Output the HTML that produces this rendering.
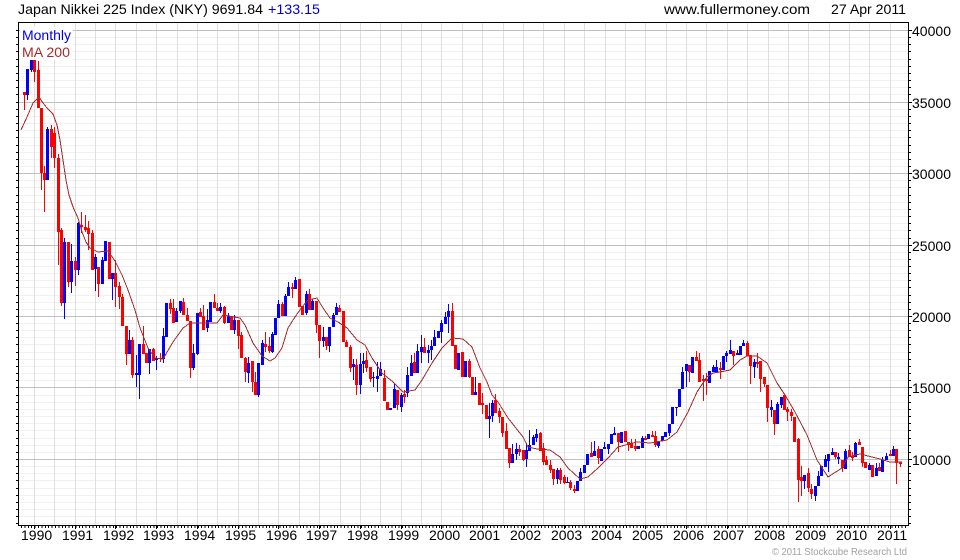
<!DOCTYPE html>
<html><head><meta charset="utf-8"><title>Japan Nikkei 225 Index</title>
<style>html,body{margin:0;padding:0;background:#fff}svg{display:block}text{font-family:"Liberation Sans",Arial,sans-serif;font-size:14px;fill:#000}</style></head>
<body>
<svg xmlns="http://www.w3.org/2000/svg" width="960" height="560" viewBox="0 0 960 560">
<g shape-rendering="crispEdges" fill="none">
<path stroke="#f0f0f0" stroke-width="1" d="M19 37.5H908M19 44.5H908M19 51.5H908M19 59.5H908M19 66.5H908M19 73.5H908M19 80.5H908M19 87.5H908M19 94.5H908M19 109.5H908M19 116.5H908M19 123.5H908M19 130.5H908M19 137.5H908M19 145.5H908M19 152.5H908M19 159.5H908M19 166.5H908M19 180.5H908M19 187.5H908M19 195.5H908M19 202.5H908M19 209.5H908M19 216.5H908M19 223.5H908M19 230.5H908M19 238.5H908M19 252.5H908M19 259.5H908M19 266.5H908M19 273.5H908M19 280.5H908M19 287.5H908M19 295.5H908M19 302.5H908M19 309.5H908M19 323.5H908M19 330.5H908M19 337.5H908M19 344.5H908M19 352.5H908M19 359.5H908M19 366.5H908M19 373.5H908M19 380.5H908M19 395.5H908M19 402.5H908M19 409.5H908M19 416.5H908M19 423.5H908M19 430.5H908M19 438.5H908M19 445.5H908M19 452.5H908M19 466.5H908M19 473.5H908M19 480.5H908M19 488.5H908M19 495.5H908M19 502.5H908M19 509.5H908M19 516.5H908M19 523.5H908"/>
<path stroke="#dedede" stroke-width="1" d="M34.5 23V525M54.5 23V525M75.5 23V525M95.5 23V525M115.5 23V525M136.5 23V525M156.5 23V525M177.5 23V525M197.5 23V525M217.5 23V525M238.5 23V525M258.5 23V525M278.5 23V525M299.5 23V525M319.5 23V525M340.5 23V525M360.5 23V525M380.5 23V525M401.5 23V525M421.5 23V525M441.5 23V525M462.5 23V525M482.5 23V525M503.5 23V525M523.5 23V525M543.5 23V525M564.5 23V525M584.5 23V525M605.5 23V525M625.5 23V525M645.5 23V525M666.5 23V525M686.5 23V525M706.5 23V525M727.5 23V525M747.5 23V525M768.5 23V525M788.5 23V525M808.5 23V525M829.5 23V525M849.5 23V525M869.5 23V525M890.5 23V525"/>
<path stroke="#c0c0c0" stroke-width="1" d="M19 30.5H908M19 102.5H908M19 173.5H908M19 245.5H908M19 316.5H908M19 387.5H908M19 459.5H908"/>
<rect x="20" y="27" width="53" height="33" fill="#fff" stroke="none"/>

<!-- red wicks -->
<path stroke="#f00" stroke-width="1" d="M24.5 92V110M34.5 60V82M38.5 61V108M41.5 108V190M44.5 166V212M51.5 125V158M54.5 127V168M58.5 154V265M61.5 228V306M68.5 242V287M75.5 257V286M81.5 212V233M85.5 215V232M88.5 221V250M92.5 230V270M98.5 267V297M115.5 260V307M119.5 282V309M122.5 294V326M126.5 326V365M132.5 337V378M143.5 326V354M153.5 348V361M160.5 353V362M170.5 299V314M173.5 299V323M183.5 298V315M187.5 308V321M190.5 321V378M200.5 308V317M203.5 305V330M214.5 294V308M217.5 303V311M224.5 306V324M238.5 320V349M241.5 332V358M245.5 357V382M252.5 361V392M255.5 372V395M265.5 332V352M269.5 337V353M282.5 302V316M292.5 283V298M309.5 289V310M316.5 301V333M319.5 325V358M326.5 337V350M339.5 305V312M346.5 340V347M350.5 345V372M356.5 359V395M366.5 351V372M370.5 367V382M384.5 370V401M397.5 390V410M404.5 390V403M414.5 353V373M424.5 338V353M452.5 303V346M469.5 359V378M479.5 383V405M482.5 393V414M495.5 394V413M499.5 408V423M502.5 417V437M506.5 423V449M509.5 448V468M519.5 445V456M523.5 450V461M540.5 432V451M543.5 443V465M546.5 456V465M550.5 460V473M553.5 469V485M560.5 468V484M564.5 475V484M570.5 480V490M574.5 485V493M591.5 442V457M598.5 446V464M618.5 433V452M628.5 442V451M631.5 439V448M635.5 439V451M645.5 436V440M652.5 431V437M655.5 431V447M689.5 365V382M696.5 351V361M699.5 353V382M703.5 375V401M706.5 373V395M720.5 362V379M733.5 351V365M747.5 341V356M750.5 355V384M757.5 353V368M760.5 361V392M764.5 377V387M767.5 385V422M774.5 410V435M787.5 407V421M791.5 409V421M798.5 438V502M801.5 466V496M808.5 468V492M811.5 484V499M835.5 452V459M842.5 460V472M849.5 445V457M852.5 452V461M859.5 439V445M862.5 447V467M879.5 463V471M890.5 450V456M896.5 449V484M900.5 462V467"/>
<!-- blue wicks -->
<path stroke="#00f" stroke-width="1" d="M27.5 69V100M31.5 60V72M47.5 127V180M64.5 238V319M71.5 244V293M78.5 222V275M95.5 254V291M102.5 257V284M112.5 273V300M129.5 330V354M136.5 355V387M139.5 344V399M149.5 349V374M156.5 356V370M163.5 328V363M176.5 308V322M180.5 301V313M193.5 344V370M197.5 313V355M207.5 309V332M220.5 303V313M228.5 313V323M234.5 315V334M248.5 357V383M258.5 363V397M262.5 340V365M272.5 332V353M278.5 300V318M285.5 294V316M288.5 282V296M295.5 277V289M306.5 291V315M312.5 299V310M323.5 327V347M329.5 327V352M333.5 313V327M336.5 303V315M353.5 359V380M360.5 353V394M363.5 353V373M373.5 372V387M377.5 362V392M380.5 362V376M394.5 383V408M401.5 393V412M407.5 367V397M411.5 355V376M417.5 344V373M421.5 335V363M428.5 345V363M431.5 340V360M434.5 330V346M441.5 320V343M445.5 312V324M448.5 304V333M475.5 377V395M489.5 403V438M492.5 400V422M512.5 444V463M516.5 443V460M526.5 443V467M529.5 430V451M533.5 435V445M536.5 429V442M557.5 468V484M567.5 477V483M580.5 468V481M594.5 441V456M604.5 442V449M608.5 444V454M614.5 427V435M642.5 436V448M658.5 442V448M669.5 424V436M676.5 407V416M682.5 367V389M686.5 364V387M713.5 365V372M716.5 360V372M726.5 351V362M730.5 340V354M737.5 350V355M743.5 340V346M754.5 359V378M771.5 400V417M777.5 402V424M781.5 397V408M804.5 475V489M815.5 486V501M818.5 471V486M825.5 455V467M828.5 454V472M832.5 448V455M838.5 453V464M845.5 449V469M855.5 442V457M869.5 463V470M876.5 463V476M882.5 457V472M886.5 453V460M893.5 446V456"/>
<!-- red bodies -->
<path stroke="#f00" stroke-width="3" d="M24.5 92V95M34.5 60V72M38.5 70V108M41.5 108V173M44.5 173V180M51.5 129V147M54.5 133V158M58.5 158V232M61.5 230V303M68.5 242V282M75.5 261V270M81.5 225V227M85.5 227V230M88.5 228V234M92.5 233V270M98.5 267V284M109.5 242V279M115.5 273V287M119.5 286V297M122.5 297V326M126.5 326V354M132.5 340V375M143.5 344V354M146.5 353V363M153.5 349V361M160.5 358V359M170.5 303V309M173.5 308V323M183.5 302V315M187.5 315V321M190.5 321V368M200.5 312V317M203.5 316V330M214.5 302V308M217.5 308V311M224.5 307V323M231.5 317V330M238.5 320V336M241.5 335V358M245.5 358V372M252.5 361V382M255.5 382V395M265.5 344V347M269.5 346V351M282.5 304V316M292.5 287V289M299.5 279V307M302.5 306V315M309.5 294V310M316.5 301V325M319.5 325V341M326.5 337V346M339.5 308V312M343.5 311V342M346.5 342V347M350.5 347V368M356.5 365V385M366.5 360V368M370.5 367V379M384.5 378V401M387.5 402V410M397.5 390V405M404.5 394V397M414.5 362V373M424.5 347V353M452.5 311V346M455.5 345V369M462.5 352V377M469.5 361V377M472.5 377V395M479.5 383V405M482.5 403V405M486.5 405V419M495.5 400V413M499.5 411V417M502.5 417V433M506.5 431V449M509.5 448V463M519.5 449V452M523.5 450V460M540.5 433V451M543.5 448V462M546.5 460V465M550.5 465V470M553.5 469V479M560.5 470V480M564.5 477V483M570.5 482V488M574.5 489V491M591.5 453V457M598.5 449V458M618.5 433V442M625.5 431V442M628.5 442V445M631.5 443V448M635.5 446V449M645.5 438V440M652.5 435V437M655.5 436V445M689.5 365V372M696.5 357V361M699.5 360V382M703.5 379V381M706.5 379V381M720.5 368V370M733.5 351V356M747.5 343V356M750.5 355V366M757.5 362V364M760.5 361V379M764.5 377V384M767.5 385V408M774.5 410V424M784.5 395V410M787.5 409V412M791.5 412V416M794.5 417V442M798.5 439V480M801.5 477V481M808.5 473V488M811.5 489V494M835.5 452V457M842.5 460V468M849.5 450V457M852.5 456V458M859.5 442V445M862.5 447V463M865.5 462V468M872.5 465V477M879.5 467V471M890.5 454V456M896.5 449V463M900.5 462V464"/>
<!-- blue bodies -->
<path stroke="#00f" stroke-width="3" d="M27.5 69V95M31.5 60V70M47.5 129V180M64.5 242V303M71.5 261V282M78.5 223V270M95.5 257V269M102.5 260V284M105.5 241V261M112.5 273V279M129.5 340V354M136.5 373V375M139.5 344V375M149.5 349V363M156.5 358V360M163.5 336V359M166.5 303V337M176.5 311V322M180.5 301V311M193.5 353V368M197.5 313V354M207.5 320V328M210.5 302V322M220.5 307V311M228.5 316V323M234.5 320V330M248.5 363V373M258.5 363V395M262.5 343V365M272.5 334V352M275.5 318V335M278.5 304V318M285.5 296V316M288.5 287V296M295.5 280V289M306.5 294V313M312.5 301V310M323.5 337V341M329.5 327V346M333.5 315V327M336.5 307V315M353.5 364V367M360.5 364V385M363.5 361V364M373.5 377V378M377.5 376V379M380.5 369V376M390.5 408V410M394.5 389V408M401.5 395V407M407.5 375V393M411.5 363V376M417.5 351V373M421.5 347V352M428.5 350V353M431.5 346V350M434.5 337V346M438.5 331V338M441.5 323V332M445.5 317V324M448.5 311V317M458.5 353V370M465.5 361V377M475.5 392V395M489.5 416V419M492.5 403V416M512.5 454V463M516.5 449V454M526.5 450V459M529.5 445V451M533.5 437V445M536.5 434V438M557.5 470V479M567.5 482V483M577.5 481V491M580.5 472V481M584.5 465V473M587.5 454V465M594.5 451V456M601.5 449V461M604.5 447V449M608.5 444V449M611.5 434V444M614.5 433V435M621.5 432V443M638.5 446V449M642.5 438V448M648.5 434V439M658.5 442V446M662.5 436V441M665.5 432V437M669.5 424V433M672.5 407V424M676.5 407V408M679.5 389V407M682.5 372V389M686.5 364V371M692.5 357V373M709.5 371V383M713.5 367V372M716.5 367V372M723.5 356V370M726.5 353V356M730.5 350V354M737.5 353V355M740.5 346V355M743.5 343V346M754.5 362V367M771.5 407V410M777.5 404V424M781.5 397V405M804.5 475V481M815.5 486V496M818.5 476V486M821.5 466V476M825.5 459V467M828.5 454V461M832.5 452V455M838.5 457V459M845.5 451V469M855.5 443V457M869.5 465V470M876.5 468V476M882.5 460V472M886.5 456V460M893.5 449V456"/>
<!-- moving average -->
<polyline stroke="#a52a2a" stroke-width="1" points="21,130 27,117 33,103 39,97 43,103 47,108 53,114 57,125 60,140 63,160 66,180 69,195 73,207 78,218 82,232 86,242 90,248 98,252 108,251 115,261 122,275 128,290 135,310 140,328 148,348 155,358 163,359 173,342 183,328 190,323 217,323 223,315 240,318 245,325 253,343 262,356 270,361 275,358 282,348 288,328 295,317 302,307 308,300 317,298 323,308 330,318 338,322 347,328 357,340 365,345 372,358 382,373 393,382 403,392 415,390 422,380 432,363 442,348 452,338 463,339 472,347 480,368 487,382 492,395 498,402 508,418 523,437 528,447 537,449 550,450 560,457 568,468 580,479 588,477 598,468 608,458 618,447 637,442 650,443 667,440 677,432 688,412 697,392 707,377 713,373 720,372 730,370 740,360 747,356 757,356 767,363 777,383 785,395 795,412 807,435 817,460 828,477 842,468 848,457 860,454 880,459 890,462 902,462"/>
<!-- frame -->
<path stroke="#000" stroke-width="1" d="M18 22.5H909M908.5 22V526M18.5 22V526M18 525.5H909"/>
<path stroke="#000" stroke-width="1" d="M16 30.5H18M16 37.5H18M16 44.5H18M16 51.5H18M16 59.5H18M16 66.5H18M16 73.5H18M16 80.5H18M16 87.5H18M16 94.5H18M16 102.5H18M16 109.5H18M16 116.5H18M16 123.5H18M16 130.5H18M16 137.5H18M16 145.5H18M16 152.5H18M16 159.5H18M16 166.5H18M16 173.5H18M16 180.5H18M16 187.5H18M16 195.5H18M16 202.5H18M16 209.5H18M16 216.5H18M16 223.5H18M16 230.5H18M16 238.5H18M16 245.5H18M16 252.5H18M16 259.5H18M16 266.5H18M16 273.5H18M16 280.5H18M16 287.5H18M16 295.5H18M16 302.5H18M16 309.5H18M16 316.5H18M16 323.5H18M16 330.5H18M16 337.5H18M16 344.5H18M16 352.5H18M16 359.5H18M16 366.5H18M16 373.5H18M16 380.5H18M16 387.5H18M16 395.5H18M16 402.5H18M16 409.5H18M16 416.5H18M16 423.5H18M16 430.5H18M16 438.5H18M16 445.5H18M16 452.5H18M16 459.5H18M16 466.5H18M16 473.5H18M16 480.5H18M16 488.5H18M16 495.5H18M16 502.5H18M16 509.5H18M16 516.5H18M16 523.5H18"/>
<path stroke="#000" stroke-width="1" d="M909 30.5H912M909 37.5H911M909 44.5H911M909 51.5H911M909 59.5H911M909 66.5H911M909 73.5H911M909 80.5H911M909 87.5H911M909 94.5H911M909 102.5H912M909 109.5H911M909 116.5H911M909 123.5H911M909 130.5H911M909 137.5H911M909 145.5H911M909 152.5H911M909 159.5H911M909 166.5H911M909 173.5H912M909 180.5H911M909 187.5H911M909 195.5H911M909 202.5H911M909 209.5H911M909 216.5H911M909 223.5H911M909 230.5H911M909 238.5H911M909 245.5H912M909 252.5H911M909 259.5H911M909 266.5H911M909 273.5H911M909 280.5H911M909 287.5H911M909 295.5H911M909 302.5H911M909 309.5H911M909 316.5H912M909 323.5H911M909 330.5H911M909 337.5H911M909 344.5H911M909 352.5H911M909 359.5H911M909 366.5H911M909 373.5H911M909 380.5H911M909 387.5H912M909 395.5H911M909 402.5H911M909 409.5H911M909 416.5H911M909 423.5H911M909 430.5H911M909 438.5H911M909 445.5H911M909 452.5H911M909 459.5H912M909 466.5H911M909 473.5H911M909 480.5H911M909 488.5H911M909 495.5H911M909 502.5H911M909 509.5H911M909 516.5H911M909 523.5H911"/>
<line x1="21" y1="527" x2="908" y2="527" stroke="#000" stroke-width="2" stroke-dasharray="1 2.4"/>
<path stroke="#000" stroke-width="1" d="M34.5 526V529M75.5 526V529M115.5 526V529M156.5 526V529M197.5 526V529M238.5 526V529M278.5 526V529M319.5 526V529M360.5 526V529M401.5 526V529M441.5 526V529M482.5 526V529M523.5 526V529M564.5 526V529M605.5 526V529M645.5 526V529M686.5 526V529M727.5 526V529M768.5 526V529M808.5 526V529M849.5 526V529M890.5 526V529"/>
</g>
<!-- header -->
<text x="18" y="14" textLength="245" lengthAdjust="spacingAndGlyphs">Japan Nikkei 225 Index (NKY) 9691.84</text>
<text x="268" y="14" textLength="52" lengthAdjust="spacingAndGlyphs" style="fill:#0000c8">+133.15</text>
<text x="664" y="14" textLength="146" lengthAdjust="spacingAndGlyphs">www.fullermoney.com</text>
<text x="831" y="14" textLength="75" lengthAdjust="spacingAndGlyphs">27 Apr 2011</text>
<text x="22" y="40" textLength="49" lengthAdjust="spacingAndGlyphs" style="fill:#0000e0">Monthly</text>
<text x="22" y="57" textLength="48" lengthAdjust="spacingAndGlyphs" style="fill:#a52a2a">MA 200</text>
<!-- y axis labels -->
<text x="912" y="36" textLength="39">40000</text>
<text x="912" y="108" textLength="39">35000</text>
<text x="912" y="179" textLength="39">30000</text>
<text x="912" y="251" textLength="39">25000</text>
<text x="912" y="322" textLength="39">20000</text>
<text x="912" y="393" textLength="39">15000</text>
<text x="912" y="465" textLength="39">10000</text>
<!-- x axis labels -->
<text x="21" y="540">1990</text><text x="62" y="540">1991</text><text x="103" y="540">1992</text><text x="143" y="540">1993</text><text x="184" y="540">1994</text><text x="225" y="540">1995</text><text x="266" y="540">1996</text><text x="306" y="540">1997</text><text x="347" y="540">1998</text><text x="388" y="540">1999</text><text x="429" y="540">2000</text><text x="469" y="540">2001</text><text x="510" y="540">2002</text><text x="551" y="540">2003</text><text x="591" y="540">2004</text><text x="632" y="540">2005</text><text x="673" y="540">2006</text><text x="713" y="540">2007</text><text x="754" y="540">2008</text><text x="795" y="540">2009</text><text x="836" y="540">2010</text><text x="877" y="540">2011</text>
<text x="772" y="555" textLength="135" lengthAdjust="spacingAndGlyphs" style="font-size:10px;fill:#a0a0a0">© 2011 Stockcube Research Ltd</text>
</svg>
</body></html>
